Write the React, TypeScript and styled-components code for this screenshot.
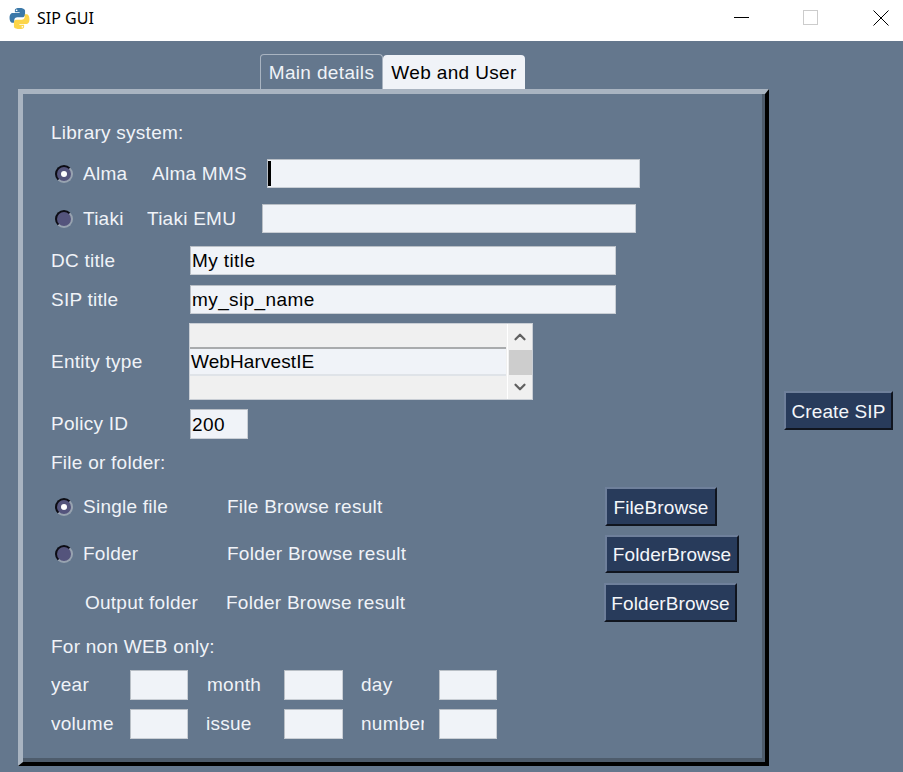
import React from 'react';
import styled, { createGlobalStyle } from 'styled-components';
import { ChevronDown, ChevronUp } from 'lucide-react';

const Global = createGlobalStyle`
    html, body { margin: 0; padding: 0; }
    body {
        width: 903px;
        height: 772px;
        overflow: hidden;
        background: #64778d;
        font-family: "Liberation Sans", Arial, sans-serif;
    }
    * { box-sizing: border-box; }
`;

const TitleBar = styled.div`
    display: flex;
    align-items: center;
    height: 41px;
    padding: 0 0 5px 8px;
    background: #fff;
`;

const AppTitle = styled.span`
    margin-left: 6px;
    font-family: "Noto Sans", sans-serif;
    font-size: 16px;
    color: #000;
`;

const WindowButtons = styled.div`
    display: flex;
    align-items: center;
    gap: 54px;
    margin-left: auto;
    margin-right: 14px;
`;

const Body = styled.div`
    display: flex;
    height: 731px;
    padding: 13px 0 0 18px;
`;

const Main = styled.div`
    display: flex;
    flex-direction: column;
    width: 751px;
`;

const Aside = styled.div`
    display: flex;
    align-items: center;
    padding: 0 0 5px 15px;
`;

const TabStrip = styled.div`
    display: flex;
    align-items: flex-end;
    height: 35px;
    margin-left: 242px;
`;

const Tab = styled.div<{ $active?: boolean }>`
    display: flex;
    align-items: center;
    justify-content: center;
    height: ${p => (p.$active ? 34 : 35)}px;
    width: ${p => (p.$active ? 142 : 123)}px;
    padding-top: 2px;
    font-size: 19px;
    letter-spacing: 0.35px;
    border: ${p => (p.$active ? 'none' : '1px solid #a9b4c1')};
    border-bottom: none;
    border-radius: 4px 4px 0 0;
    background: ${p => (p.$active ? '#f0f3f8' : '#64778d')};
    color: ${p => (p.$active ? '#000' : '#f0f3f8')};
`;

const Panel = styled.div`
    display: flex;
    flex-direction: column;
    height: 677px;
    padding: 0 0 0 28px;
    border-style: solid;
    border-width: 5px 4px 4px 5px;
    border-color: #a9b4c1 #000 #000 #a9b4c1;
    box-shadow: inset -3px -4px 0 #4e5c6c;
`;

const Row = styled.div<{ $mt: number; $h: number }>`
    display: flex;
    align-items: center;
    flex: none;
    margin-top: ${p => p.$mt}px;
    height: ${p => p.$h}px;
`;

const Label = styled.span<{ $w?: number; $ml?: number; $mr?: number }>`
    flex: none;
    display: block;
    width: ${p => (p.$w ? `${p.$w}px` : 'auto')};
    margin-left: ${p => p.$ml ?? 0}px;
    margin-right: ${p => p.$mr ?? 0}px;
    overflow: hidden;
    white-space: nowrap;
    font-size: 19px;
    letter-spacing: 0.25px;
    line-height: 24px;
    color: #f0f3f8;
`;

const Radio = styled.span<{ $checked?: boolean }>`
    position: relative;
    flex: none;
    width: 18px;
    height: 18px;
    margin: 0 10px 0 4px;
    border-radius: 50%;
    border: 2px solid;
    border-color: #0c0c14 #98a3b0 #98a3b0 #0c0c14;
    background: #54547c;

    &::after {
        content: '';
        display: ${p => (p.$checked ? 'block' : 'none')};
        position: absolute;
        left: 4px;
        top: 4px;
        width: 6px;
        height: 6px;
        border-radius: 50%;
        background: #fff;
    }
`;

const InputWrap = styled.span`
    position: relative;
    display: flex;
    flex: none;
`;

const Caret = styled.span`
    position: absolute;
    left: 1px;
    top: 2px;
    width: 3px;
    height: 25px;
    background: #000;
`;

const TextInput = styled.input<{ $w: number; $h?: number }>`
    flex: none;
    width: ${p => p.$w}px;
    height: ${p => p.$h ?? 29}px;
    padding: 1px 1px 0;
    border: 1px solid;
    border-color: #b9bfc6 #c9ced5 #c9ced5 #b9bfc6;
    border-radius: 0;
    outline: none;
    background: #f0f3f8;
    font-family: "Liberation Sans", Arial, sans-serif;
    font-size: 19px;
    letter-spacing: 0.4px;
    color: #000;
`;

const ListBox = styled.div`
    display: flex;
    flex: none;
    width: 344px;
    height: 77px;
    background: #f0f0f0;
    border: 1px solid #c9ced5;
`;

const ListItems = styled.div`
    display: flex;
    flex: 1;
    flex-direction: column;
    justify-content: center;
    margin-right: 1px;
`;

const ListItem = styled.div`
    height: 29px;
    padding-left: 1px;
    font-size: 19px;
    letter-spacing: 0.1px;
    line-height: 26px;
    color: #000;
    background: #f0f3f8;
    border-top: 2px solid #a9abad;
    border-bottom: 2px solid #dfe3e8;
`;

const ScrollBar = styled.div`
    display: flex;
    flex: none;
    flex-direction: column;
    align-items: center;
    justify-content: space-between;
    width: 25px;
    border-left: 1px solid #fff;
    padding: 1px 0 0;
    color: #606060;
`;

const ScrollButton = styled.span`
    display: flex;
    align-items: center;
    justify-content: center;
    height: 24px;
`;

const ScrollThumb = styled.span`
    width: 23px;
    height: 25px;
    background: #cdcdcd;
`;

const Button = styled.button<{ $w: number; $h?: number }>`
    flex: none;
    width: ${p => p.$w}px;
    height: ${p => p.$h ?? 39}px;
    padding: 2px 0 0;
    border: 2px solid;
    border-color: #6f809b #10151f #10151f #6f809b;
    background: #283b5b;
    color: #f4f6fa;
    font-family: "Liberation Sans", Arial, sans-serif;
    font-size: 19px;
    letter-spacing: 0.1px;
`;

const PythonLogo = () => (
    <svg width="23" height="23" viewBox="0 0 24 24">
        <path
            fill="#3b78a8"
            d="M11.9 1C6.9 1 7.2 3.2 7.2 3.2v2.3h4.9v.7H5.2S1.6 5.8 1.6 11.2s3.1 5.2 3.1 5.2h1.9v-2.6s-.1-3.1 3.1-3.1h5.1s3 0 3-2.9V3.9S18.3 1 11.9 1z"
        />
        <path
            fill="#fcd54a"
            d="M12.1 23c5 0 4.7-2.2 4.7-2.2v-2.3h-4.9v-.7h6.9s3.6.4 3.6-5-3.1-5.2-3.1-5.2h-1.9v2.6s.1 3.1-3.1 3.1H9.2s-3 0-3 2.9v3.9S5.7 23 12.1 23z"
        />
        <circle cx="9" cy="3.4" r="0.9" fill="#fff" />
        <circle cx="15" cy="20.6" r="0.9" fill="#fff" />
    </svg>
);

const WindowIcon = ({ children }: { children: React.ReactNode }) => (
    <svg width="16" height="16" viewBox="0 0 16 16" fill="none">
        {children}
    </svg>
);

const smallFields = [
    [
        { name: 'year', width: 79, labelGap: 0, inputWidth: 58, inputGap: 19 },
        { name: 'month', width: 77, labelGap: 0, inputWidth: 59, inputGap: 18 },
        { name: 'day', width: 78, labelGap: 0, inputWidth: 58, inputGap: 0 },
    ],
    [
        { name: 'volume', width: 79, labelGap: 0, inputWidth: 58, inputGap: 18 },
        { name: 'issue', width: 78, labelGap: 0, inputWidth: 59, inputGap: 18 },
        { name: 'number', width: 63, labelGap: 15, inputWidth: 58, inputGap: 0 },
    ],
];

const SmallInput = styled(TextInput)<{ $mr: number }>`
    margin-right: ${p => p.$mr}px;
`;

const App: React.FC = () => {
    return (
        <>
            <Global />
            <TitleBar>
                <PythonLogo />
                <AppTitle>SIP GUI</AppTitle>
                <WindowButtons>
                    <WindowIcon>
                        <path d="M1 7.5H16" stroke="#000" />
                    </WindowIcon>
                    <WindowIcon>
                        <rect x="0.5" y="0.5" width="14" height="14" stroke="#ccc" />
                    </WindowIcon>
                    <WindowIcon>
                        <path d="M0.5 0.5L15.5 15.5M15.5 0.5L0.5 15.5" stroke="#000" />
                    </WindowIcon>
                </WindowButtons>
            </TitleBar>
            <Body>
                <Main>
                    <TabStrip>
                        <Tab>Main details</Tab>
                        <Tab $active>Web and User</Tab>
                    </TabStrip>
                    <Panel>
                        <Row $mt={27} $h={24}>
                            <Label>Library system:</Label>
                        </Row>
                        <Row $mt={14} $h={29}>
                            <Radio $checked />
                            <Label $w={69}>Alma</Label>
                            <Label $w={115}>Alma MMS</Label>
                            <InputWrap>
                                <TextInput $w={373} readOnly />
                                <Caret />
                            </InputWrap>
                        </Row>
                        <Row $mt={16} $h={29}>
                            <Radio />
                            <Label $w={64}>Tiaki</Label>
                            <Label $w={115}>Tiaki EMU</Label>
                            <TextInput $w={374} readOnly />
                        </Row>
                        <Row $mt={13} $h={29}>
                            <Label $w={139}>DC title</Label>
                            <TextInput $w={426} readOnly value="My title" />
                        </Row>
                        <Row $mt={10} $h={29}>
                            <Label $w={139}>SIP title</Label>
                            <TextInput $w={426} readOnly value="my_sip_name" />
                        </Row>
                        <Row $mt={9} $h={77}>
                            <Label $w={138}>Entity type</Label>
                            <ListBox>
                                <ListItems>
                                    <ListItem>WebHarvestIE</ListItem>
                                </ListItems>
                                <ScrollBar>
                                    <ScrollButton>
                                        <ChevronUp size={18} strokeWidth={3} />
                                    </ScrollButton>
                                    <ScrollThumb />
                                    <ScrollButton>
                                        <ChevronDown size={18} strokeWidth={3} />
                                    </ScrollButton>
                                </ScrollBar>
                            </ListBox>
                        </Row>
                        <Row $mt={9} $h={30}>
                            <Label $w={139}>Policy ID</Label>
                            <TextInput $w={58} $h={30} readOnly value="200" />
                        </Row>
                        <Row $mt={12} $h={24}>
                            <Label>File or folder:</Label>
                        </Row>
                        <Row $mt={12} $h={39}>
                            <Radio $checked />
                            <Label $w={144}>Single file</Label>
                            <Label $w={378}>File Browse result</Label>
                            <Button $w={112}>FileBrowse</Button>
                        </Row>
                        <Row $mt={9} $h={38}>
                            <Radio />
                            <Label $w={144}>Folder</Label>
                            <Label $w={378}>Folder Browse result</Label>
                            <Button $w={134} $h={38}>FolderBrowse</Button>
                        </Row>
                        <Row $mt={10} $h={39}>
                            <Label $w={141} $ml={34}>Output folder</Label>
                            <Label $w={378}>Folder Browse result</Label>
                            <Button $w={133}>FolderBrowse</Button>
                        </Row>
                        <Row $mt={13} $h={24}>
                            <Label>For non WEB only:</Label>
                        </Row>
                        {smallFields.map((fields, rowIndex) => (
                            <Row key={rowIndex} $mt={rowIndex === 0 ? 11 : 9} $h={30}>
                                {fields.map(field => (
                                    <React.Fragment key={field.name}>
                                        <Label $w={field.width} $mr={field.labelGap}>{field.name}</Label>
                                        <SmallInput $w={field.inputWidth} $h={30} $mr={field.inputGap} readOnly />
                                    </React.Fragment>
                                ))}
                            </Row>
                        ))}
                    </Panel>
                </Main>
                <Aside>
                    <Button $w={109}>Create SIP</Button>
                </Aside>
            </Body>
        </>
    );
};

export default App;
